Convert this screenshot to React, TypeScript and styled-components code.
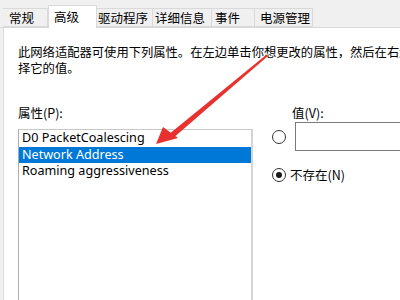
import * as React from 'react';
import styled, { createGlobalStyle } from 'styled-components';

const CJK = `"Noto Sans CJK SC", "Noto Sans", sans-serif`;

const GlobalStyle = createGlobalStyle`
  html, body {
    margin: 0;
    padding: 0;
    background: #ffffff;
    overflow: hidden;
  }
  body {
    font-family: ${CJK};
    color: #000000;
  }
`;

const Window = styled.div`
  position: relative;
  width: 400px;
  height: 300px;
  display: flex;
  flex-direction: column;
  background: #f0f0f0;
  overflow: hidden;
`;

const TabBar = styled.div`
  height: 28px;
  flex: none;
  display: flex;
  align-items: flex-end;
  padding-left: 3px;
  box-sizing: border-box;
  border-bottom: 1px solid #d9d9d9;
`;

const Tab = styled.div<{ $width: number; $active?: boolean; $pad: number }>`
  box-sizing: border-box;
  flex: none;
  width: ${({ $width }) => $width}px;
  height: ${({ $active }) => ($active ? 23 : 19)}px;
  margin-bottom: ${({ $active }) => ($active ? -1 : 0)}px;
  padding-left: ${({ $pad }) => $pad}px;
  padding-top: ${({ $active }) => ($active ? 0 : 1)}px;
  display: flex;
  align-items: center;
  font-size: 12.5px;
  line-height: 1;
  white-space: nowrap;
  background: ${({ $active }) => ($active ? '#ffffff' : '#f0f0f0')};
  border: 1px solid #d9d9d9;
  border-bottom: ${({ $active }) => ($active ? 'none' : '1px solid #d9d9d9')};
  border-left: ${({ $active }) => ($active ? '1px solid #d9d9d9' : 'none')};
  position: relative;
  z-index: ${({ $active }) => ($active ? 1 : 0)};
`;

const Panel = styled.div`
  flex: 1;
  margin-left: 3px;
  background: #ffffff;
  border-left: 1px solid #dcdcdc;
  padding: 16px 0 0 14px;
  display: flex;
  flex-direction: column;
  min-height: 0;
`;

const Description = styled.p`
  margin: 0;
  width: 412px;
  font-size: 12.3px;
  line-height: 16px;
`;

const Columns = styled.div`
  flex: 1;
  display: flex;
  margin-top: 29px;
  min-height: 0;
`;

const LeftColumn = styled.div`
  flex: none;
  width: 235px;
  display: flex;
  flex-direction: column;
`;

const RightColumn = styled.div`
  flex: none;
  display: flex;
  flex-direction: column;
  padding-left: 19px;
`;

const FieldLabel = styled.div<{ $indent?: number }>`
  font-size: 12.5px;
  line-height: 16px;
  height: 16px;
  padding-left: ${({ $indent }) => $indent ?? 0}px;
`;

const ListBox = styled.div`
  flex: 1;
  margin-top: 8px;
  border-left: 1px solid #adadad;
  border-top: 1px solid #c8c8c8;
  border-right: 2px solid #d4d4d4;
  display: flex;
  flex-direction: column;
`;

const ListItem = styled.div<{ $selected?: boolean }>`
  height: 16.5px;
  line-height: 16.5px;
  padding-left: 3px;
  font-family: "Noto Sans", ${CJK};
  font-size: 12.6px;
  white-space: nowrap;
  background: ${({ $selected }) => ($selected ? '#0078d7' : 'transparent')};
  color: ${({ $selected }) => ($selected ? '#ffffff' : '#000000')};
`;

const OptionRow = styled.div<{ $top: number }>`
  display: flex;
  align-items: center;
  gap: 4px;
  margin-top: ${({ $top }) => $top}px;
`;

const Radio = styled.span<{ $checked?: boolean }>`
  box-sizing: border-box;
  width: 14px;
  height: 14px;
  flex: none;
  border-radius: 50%;
  border: 1px solid #333333;
  background: #ffffff;
  display: flex;
  align-items: center;
  justify-content: center;
  &::after {
    content: '';
    width: 6px;
    height: 6px;
    border-radius: 50%;
    background: ${({ $checked }) => ($checked ? '#1a1a1a' : 'transparent')};
  }
`;

const TextBox = styled.div`
  box-sizing: border-box;
  flex: none;
  margin-left: 5px;
  width: 140px;
  height: 29px;
  border: 1px solid #7a7a7a;
  background: #ffffff;
`;

const OptionText = styled.span`
  font-size: 12.5px;
  line-height: 16px;
`;

const Arrow = styled.svg`
  position: absolute;
  left: 0;
  top: 0;
  pointer-events: none;
`;

const tabs = [
  { label: '常规', width: 45, pad: 6 },
  { label: '高级', width: 49, pad: 5, active: true },
  { label: '驱动程序', width: 56, pad: 1 },
  { label: '详细信息', width: 59, pad: 2 },
  { label: '事件', width: 43, pad: 3 },
  { label: '电源管理', width: 58, pad: 5 },
];

const App: React.FC = () => (
  <>
    <GlobalStyle />
    <Window>
      <TabBar>
        {tabs.map((t) => (
          <Tab key={t.label} $width={t.width} $pad={t.pad} $active={t.active}>
            {t.label}
          </Tab>
        ))}
      </TabBar>
      <Panel>
        <Description>
          此网络适配器可使用下列属性。在左边单击你想更改的属性，然后在右边选择它的值。
        </Description>
        <Columns>
          <LeftColumn>
            <FieldLabel>属性(P):</FieldLabel>
            <ListBox>
              <ListItem>D0 PacketCoalescing</ListItem>
              <ListItem $selected>Network Address</ListItem>
              <ListItem>Roaming aggressiveness</ListItem>
            </ListBox>
          </LeftColumn>
          <RightColumn>
            <FieldLabel $indent={20}>值(V):</FieldLabel>
            <OptionRow $top={1}>
              <Radio />
              <TextBox />
            </OptionRow>
            <OptionRow $top={16}>
              <Radio $checked />
              <OptionText>不存在(N)</OptionText>
            </OptionRow>
          </RightColumn>
        </Columns>
      </Panel>
      <Arrow width="400" height="300" viewBox="0 0 400 300">
        <path d="M268 56 L266 55 L168 135 L172 139 Z" fill="#e8322f" />
        <path d="M156 144 L163 127 L178 138 Z" fill="#e8322f" />
      </Arrow>
    </Window>
  </>
);

export default App;
